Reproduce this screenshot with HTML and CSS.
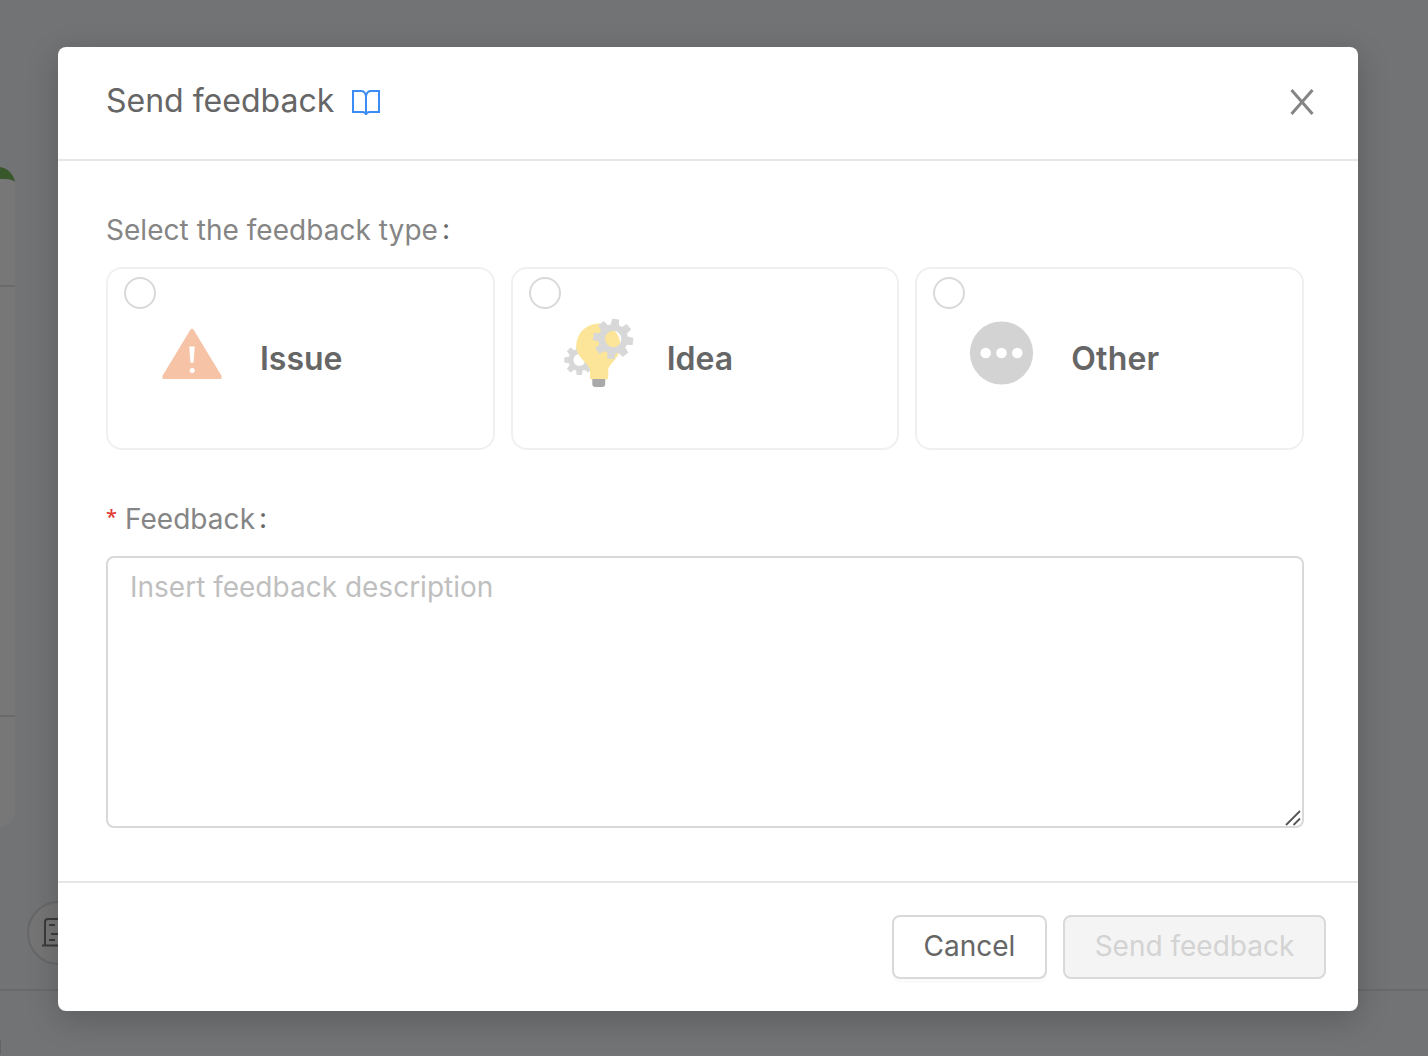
FILE: index.html
```html
<!DOCTYPE html>
<html lang="en">
<head>
<meta charset="utf-8">
<title>Send feedback</title>
<link rel="stylesheet" href="styles.css">
</head>
<body>
<div class="backdrop" aria-hidden="true">
  <svg width="1428" height="1056" viewBox="0 0 1428 1056">
    <path d="M-20 184h35v627a16 16 0 0 1-16 16h-19z" fill="#777777"/>
    <path d="M-20 167H0c8 1 14 8 15 15-4-3-9-3-15-3h-20z" fill="#38572a"/>
    <path d="M-20 179H0c6 0 11 0 15 3v10h-35z" fill="#777777"/>
    <path d="M0 286h15M0 716h15M0 990h1428" stroke="#6a6a6b" stroke-width="2"/>
    <circle cx="59" cy="933" r="31" fill="#757576" stroke="#686869" stroke-width="2"/>
    <path d="M42 945.500H74M45 945V922q0-3 3-3H70M49 925h6M51 934h7M49 940h6" fill="none" stroke="#3b3b3c" stroke-width="2"/>
    <path d="M0 1040v14" stroke="#626365" stroke-width="2"/>
  </svg>
</div>
<section class="modal" role="dialog" aria-label="Send feedback">
  <header class="modal-header">
    <h1 class="modal-title">Send feedback</h1>
    <svg class="book" width="30" height="28" viewBox="0 0 30 28" fill="none" stroke="#3c8cf5" stroke-width="2">
      <path d="M15 26V7q-1-5-5-5H2v21h9q4 0 4 3 0-3 4-3h9V2h-8q-4 0-5 5"/>
    </svg>
    <button class="close" aria-label="Close">
      <svg width="24" height="26" viewBox="0 0 24 26" fill="none" stroke="#858585" stroke-width="3"><path d="M1.500 1l21 24M22.500 1l-21 24"/></svg>
    </button>
  </header>
  <form class="modal-body">
    <div class="label">Select the feedback type<span class="colon">:</span></div>
    <div class="types">
      <label class="card">
        <input class="radio" type="radio" name="type">
        <svg class="icon" width="80" height="80" viewBox="0 0 80 80">
          <path d="M38.200 16q1.800-2.500 3.600 0L69.300 61.500q1.500 3.500-1.500 3.500H12.200q-3 0-1.500-3.500z" fill="#f6c3a6"/>
          <path d="M37.300 32.500h5.400l-1 15.500q-1.700 1.800-3.400 0z" fill="#fff"/><circle cx="40.200" cy="56.500" r="2.500" fill="#fff"/>
        </svg>
        <span class="type-name issue">Issue</span>
      </label>
      <label class="card">
        <input class="radio" type="radio" name="type">
        <svg class="icon" width="80" height="80" viewBox="0 0 80 80">
          <g transform="translate(22.300 46)" fill="#d8d8d8">
            <g id="half"><path d="M-3.400-9l.8-6h5.200l.8 6M-3.400 9l.8 6h5.200l.8-6M-9-3.400l-6 .8v5.200l6 .8M9-3.400l6 .8v5.200l-6 .8"/></g>
            <use href="#half" transform="rotate(45)"/>
            <circle r="8.400" fill="none" stroke="#d8d8d8" stroke-width="5"/>
          </g>
          <path d="M41.500 9.500a22.300 22.300 0 0 1 22 22.500c0 12-12.300 18-12.300 24.500v7q0 2-3 2H36q-3 0-3-2v-7C33 50 19.200 44 19.200 32a22.300 22.300 0 0 1 22.300-22.500z" fill="#fce598"/>
          <path d="M35.300 65h12.900v5q0 3-3 3h-6.900q-3 0-3-3z" fill="#a9a9a9"/>
          <g transform="translate(56.200 25) rotate(7)" fill="#d8d8d8">
            <g id="teeth"><path d="M-4.300-13l.8-7h7l.8 7M-4.300 13l.8 7h7l.8-7M-13-4.300l-7 .8v7l7 .8M13-4.300l7 .8v7l-7 .8"/></g>
            <use href="#teeth" transform="rotate(45)"/>
            <circle r="11.500" fill="none" stroke="#d8d8d8" stroke-width="6.600"/>
          </g>
        </svg>
        <span class="type-name idea">Idea</span>
      </label>
      <label class="card">
        <input class="radio" type="radio" name="type">
        <svg class="icon" width="80" height="80" viewBox="0 0 80 80"><circle cx="40.500" cy="39" r="31.600" fill="#d3d3d3"/><g fill="#fff"><circle cx="24.700" cy="39" r="5.300"/><circle cx="40.500" cy="39" r="5.300"/><circle cx="56.300" cy="39" r="5.300"/></g></svg>
        <span class="type-name other">Other</span>
      </label>
    </div>
    <div class="label second"><span class="required">*</span>Feedback<span class="colon">:</span></div>
    <div class="field">
      <textarea class="input" placeholder="Insert feedback description"></textarea>
      <svg class="grip" width="16" height="16" viewBox="0 0 16 16" stroke="#555" stroke-width="1.800"><path d="M1 15L15 1M8.500 15L15 8.500"/></svg>
    </div>
  </form>
  <footer class="modal-footer">
    <button class="btn">Cancel</button>
    <button class="btn disabled" disabled>Send feedback</button>
  </footer>
</section>
</body>
</html>
```
FILE: styles.css
```css
* { box-sizing: border-box; }
body {
  margin: 0;
  height: 1056px;
  overflow: hidden;
  padding: 47px 70px 0 58px;
  background: #727375;
  font-family: Inter, "Liberation Sans", sans-serif;
  font-size: 28px;
}
.backdrop { position: absolute; inset: 0; overflow: hidden; }
.modal {
  position: relative;
  display: flex;
  flex-direction: column;
  height: 964px;
  background: #fff;
  border-radius: 8px;
  box-shadow: 0 8px 32px rgba(0, 0, 0, .2);
}
.modal-header {
  display: flex;
  align-items: center;
  height: 114px;
  padding: 0 44px 4px 48px;
  border-bottom: 2px solid #e6e6e6;
}
.modal-title {
  margin: 0;
  font-size: 32px;
  font-weight: 400;
  line-height: 44px;
  color: #666;
}
.book { margin: 3px 0 0 17px; }
.close {
  display: flex;
  margin: 2px 0 0 auto;
  padding: 0;
  border: 0;
  background: none;
}
.modal-body { flex: 1; padding: 47px 54px 0 48px; }
.label {
  height: 44px;
  line-height: 44px;
  letter-spacing: .04px;
  color: #858585;
}
.colon {
  margin-left: 4px;
  line-height: 20px;
  vertical-align: 1px;
  color: #666;
}
.types {
  display: grid;
  grid-template-columns: repeat(3, 1fr);
  gap: 16px;
  margin-top: 15px;
}
.card {
  display: grid;
  grid-template-columns: 30px 80px 1fr;
  grid-template-rows: 45px 80px;
  height: 183px;
  padding-left: 14px;
  border: 2px solid #f0f0f0;
  border-radius: 16px;
}
.radio {
  appearance: none;
  width: 32px;
  height: 32px;
  margin: 8px 0 0 2px;
  border: 2px solid #d9d9d9;
  border-radius: 50%;
  background: #fff;
}
.icon { grid-column: 2; grid-row: 2; }
.type-name {
  grid-column: 3;
  grid-row: 2;
  margin: 23px 0 0 30px;
  font-size: 32px;
  font-weight: 600;
  line-height: 44px;
  color: #666;
}
.issue { margin-left: 28px; }
.other { letter-spacing: .2px; }
.second { margin-top: 47px; }
.required {
  display: inline-block;
  width: 19px;
  line-height: 20px;
  vertical-align: 5px;
  font-family: "Noto Sans", sans-serif;
  font-size: 20px;
  font-weight: 500;
  color: #e33b36;
}
.field { position: relative; height: 272px; margin-top: 15px; }
.input {
  display: block;
  width: 100%;
  height: 100%;
  padding: 7px 22px;
  border: 2px solid #d9d9d9;
  border-radius: 8px;
  outline: 0;
  resize: none;
  font: inherit;
  line-height: 44px;
}
.input::placeholder { color: #bfbfbf; }
.grip { position: absolute; right: 3px; bottom: 2px; }
.modal-footer {
  display: flex;
  justify-content: flex-end;
  gap: 16px;
  height: 130px;
  padding: 32px 32px 0 0;
  border-top: 2px solid #e6e6e6;
}
.btn {
  height: 64px;
  width: 155px;
  padding: 0 0 2px;
  border: 2px solid #d9d9d9;
  border-radius: 8px;
  background: #fff;
  box-shadow: 0 4px 0 rgba(0, 0, 0, .015);
  font: inherit;
  color: #666;
}
.disabled { width: 263px; background: #f4f4f4; box-shadow: none; color: #d3d3d3; }
```
